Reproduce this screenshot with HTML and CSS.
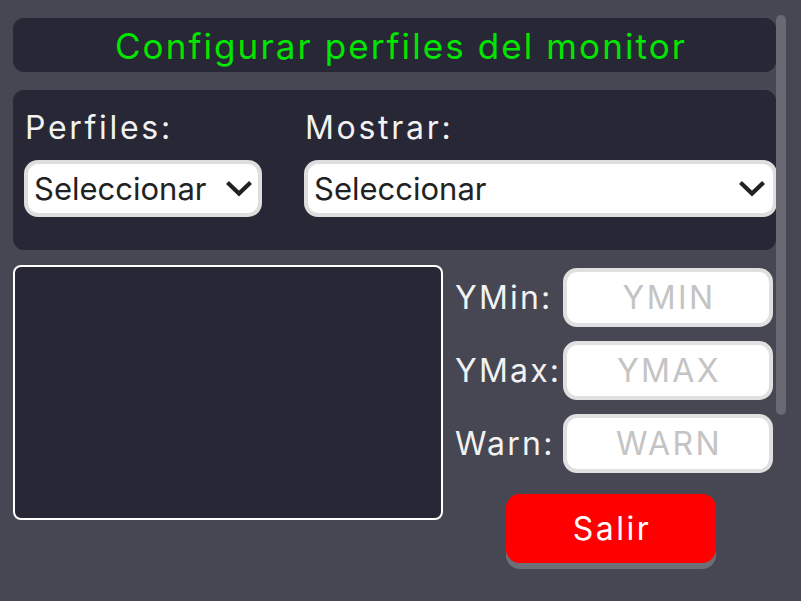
FILE: index.html
```html
<!DOCTYPE html>
<html lang="es">
<head>
<meta charset="utf-8">
<title>Configurar perfiles del monitor</title>
<link rel="stylesheet" href="styles.css">
</head>
<body>
<div class="screen">
  <header class="title-bar">Configurar perfiles del monitor</header>
  <section class="selector-panel">
    <div class="field">
      <label class="field-label">Perfiles:</label>
      <div class="select">
        <span class="select-text">Seleccionar</span>
        <svg class="chevron" viewBox="0 0 26 16" width="26" height="16"><path d="M3 3 L13 12.5 L23 3" fill="none" stroke="#222" stroke-width="4.2" stroke-linecap="square" stroke-linejoin="miter"/></svg>
      </div>
    </div>
    <div class="field">
      <label class="field-label">Mostrar:</label>
      <div class="select select-wide">
        <span class="select-text">Seleccionar</span>
        <svg class="chevron" viewBox="0 0 26 16" width="26" height="16"><path d="M3 3 L13 12.5 L23 3" fill="none" stroke="#222" stroke-width="4.2" stroke-linecap="square" stroke-linejoin="miter"/></svg>
      </div>
    </div>
  </section>
  <section class="bottom">
    <div class="chart"></div>
    <div class="controls">
      <div class="limits">
        <span class="limit-label">YMin:</span>
        <div class="input"><span class="placeholder">YMIN</span></div>
        <span class="limit-label">YMax:</span>
        <div class="input"><span class="placeholder">YMAX</span></div>
        <span class="limit-label">Warn:</span>
        <div class="input"><span class="placeholder">WARN</span></div>
      </div>
      <button class="exit-btn">Salir</button>
    </div>
  </section>
  <div class="scrollbar"></div>
</div>
</body>
</html>
```
FILE: styles.css
```css
* { box-sizing: border-box; }
html, body {
  margin: 0;
  padding: 0;
  background: #474753;
  width: 801px;
  height: 601px;
  overflow: hidden;
}
.screen {
  position: relative;
  width: 801px;
  height: 601px;
  padding: 18px 25px 0 13px;
  font-family: Inter, "Open Sans", sans-serif;
  font-size: 32px;
  color: #ffffff;
  display: flex;
  flex-direction: column;
}
.title-bar {
  height: 54px;
  background: #272735;
  border-radius: 11px;
  color: #00e600;
  font-size: 35px;
  display: flex;
  align-items: center;
  justify-content: center;
  line-height: 1;
  letter-spacing: 2.1px;
  padding: 2px 0 0 13px;
}
.selector-panel {
  margin-top: 18px;
  height: 160px;
  background: #272735;
  border-radius: 11px;
  padding: 22px 0 0 11px;
  display: grid;
  grid-template-columns: 238px 473px;
  column-gap: 42px;
}
.field {
  display: flex;
  flex-direction: column;
}
.field-label {
  line-height: 1;
  height: 32px;
  margin-bottom: 16px;
  padding-left: 1px;
  letter-spacing: 2.7px;
  color: #f2f2f2;
}
.select {
  height: 57px;
  background: #ffffff;
  border: 4px solid #dedede;
  border-radius: 14px;
  display: flex;
  align-items: center;
  justify-content: space-between;
  padding: 0 6px 0 6px;
  color: #222222;
}
.select-wide { padding-right: 8px; }
.select-text {
  line-height: 1;
  font-size: 31px;
}
.chevron { flex: none; }
.bottom {
  margin-top: 15px;
  display: grid;
  grid-template-columns: 430px 1fr;
  column-gap: 10px;
}
.chart {
  height: 255px;
  background: #272735;
  border: 2px solid #ffffff;
  border-radius: 8px;
}
.controls {
  padding-top: 3px;
  display: flex;
  flex-direction: column;
  align-items: flex-start;
}
.limits {
  display: grid;
  grid-template-columns: 110px 210px;
  grid-auto-rows: 59px;
  row-gap: 14px;
  align-items: center;
}
.limit-label {
  line-height: 1;
  padding-left: 2px;
  letter-spacing: 2.2px;
  color: #f2f2f2;
}
.input {
  height: 59px;
  background: #ffffff;
  border: 4px solid #e0e0e0;
  border-radius: 14px;
  display: flex;
  align-items: center;
  justify-content: center;
}
.placeholder {
  color: #c4c4c4;
  line-height: 1;
  letter-spacing: 2.4px;
  margin-right: -2px;
}
.exit-btn {
  margin-top: 21px;
  margin-left: 53px;
  width: 210px;
  height: 69px;
  background: #ff0000;
  border: none;
  border-radius: 14px;
  box-shadow: 0 6px 0 #6e6e78;
  color: #ffffff;
  font-family: Inter, "Open Sans", sans-serif;
  font-size: 32px;
  letter-spacing: 2.5px;
  line-height: 1;
  padding: 0 0 0 2px;
}
.scrollbar {
  position: absolute;
  top: 15px;
  left: 776px;
  width: 10px;
  height: 400px;
  background: #696973;
  border-radius: 5px;
}
```
